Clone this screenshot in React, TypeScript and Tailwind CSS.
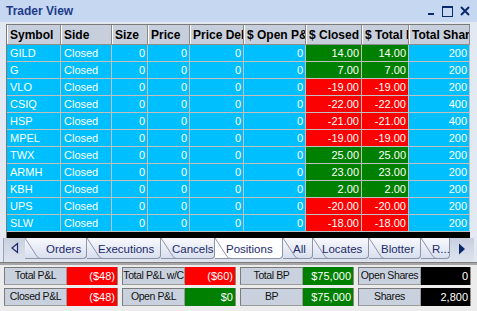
import React from "react";

const CYAN = "bg-[#00bfff]";
const GREEN = "bg-[#008000]";
const RED = "bg-[#ff0000]";

const cols = [
  { name: "Symbol", w: "w-[54px]", align: "left" },
  { name: "Side", w: "w-[51px]", align: "left" },
  { name: "Size", w: "w-[36px]", align: "right" },
  { name: "Price", w: "w-[42px]", align: "right" },
  { name: "Price Delta", w: "w-[54px]", align: "right" },
  { name: "$ Open P&L", w: "w-[62px]", align: "right" },
  { name: "$ Closed P&L", w: "w-[56px]", align: "right" },
  { name: "$ Total P&L", w: "w-[47px]", align: "right" },
  { name: "Total Shares", w: "w-[61px]", align: "right" },
];

const rows: [string, string, string][] = [
  ["GILD", "14.00", "200"],
  ["G", "7.00", "200"],
  ["VLO", "-19.00", "200"],
  ["CSIQ", "-22.00", "400"],
  ["HSP", "-21.00", "400"],
  ["MPEL", "-19.00", "200"],
  ["TWX", "25.00", "200"],
  ["ARMH", "23.00", "200"],
  ["KBH", "2.00", "200"],
  ["UPS", "-20.00", "200"],
  ["SLW", "-18.00", "200"],
];

const tabs = [
  { name: "Orders", w: "w-[62px]", pl: "pl-[21px]" },
  { name: "Executions", w: "w-[74px]", pl: "pl-[11px]" },
  { name: "Cancels", w: "w-[54px]", pl: "pl-[11px]" },
  { name: "Positions", w: "w-[68px]", pl: "pl-[11px]", active: true },
  { name: "All", w: "w-[30px]", pl: "pl-[10px]" },
  { name: "Locates", w: "w-[56px]", pl: "pl-[9px]" },
  { name: "Blotter", w: "w-[52px]", pl: "pl-[12px]" },
  { name: "R...", w: "w-[29px]", pl: "pl-[11px]" },
];

function Tab({ name, w, pl, active }: { name: string; w: string; pl: string; active?: boolean }) {
  return (
    <div
      className={`relative ${w} ${pl} h-[21px] pt-[5px] flex items-start border-r border-b border-[#8c94a8] rounded-br-[4px] overflow-hidden ${
        active ? "bg-white" : "bg-gradient-to-b from-[#f7f9fd] to-[#d9dfee]"
      } text-[11.5px] leading-[13px] text-[#1b2a6b]`}
    >
      <svg className="absolute left-0 top-0" width="16" height="21" viewBox="0 0 16 21">
        <path d="M0 0 L12 18.5 Q13.5 20.5 16 20.5" fill="none" stroke="#8c94a8" strokeWidth="1" />
      </svg>
      <span className="relative whitespace-nowrap">{name}</span>
    </div>
  );
}

function Stat({ label, value, color, vw }: { label: string; value: string; color: string; vw: string }) {
  return (
    <div className="flex h-[18px]">
      <div className="w-[63px] h-full bg-[#c9d1df] border border-t-[#7b7b7b] border-l-[#7b7b7b] border-r-[#9a9a9a] border-b-[#9a9a9a] flex items-center justify-center text-[10.5px] tracking-[-0.4px] text-[#111] whitespace-nowrap overflow-hidden">
        {label}
      </div>
      <div className={`${vw} h-full ${color} border-r border-[#8a8a8a] flex items-center justify-end pr-[2px] text-[11px] text-white`}>
        {value}
      </div>
    </div>
  );
}

export default function App() {
  return (
    <div className="w-[477px] h-[311px] overflow-hidden bg-[#e3e9f3] flex flex-col font-['Liberation_Sans',Arial,sans-serif]">
      {/* Title bar */}
      <div className="h-[22px] bg-[#c6d7f1] flex items-center pl-[6px] pr-[7px] shrink-0">
        <span className="text-[12px] font-bold text-[#1d3b8b]">Trader View</span>
        <div className="ml-auto flex items-center gap-[7px]">
          <svg width="10" height="12" viewBox="0 0 10 12">
            <rect x="3" y="8" width="6" height="2" fill="#0b2a6c" />
          </svg>
          <svg width="11" height="11" viewBox="0 0 11 11">
            <rect x="0.5" y="0.5" width="10" height="10" fill="none" stroke="#0b2a6c" strokeWidth="1" />
            <rect x="0" y="0" width="11" height="2" fill="#0b2a6c" />
          </svg>
          <svg width="10" height="10" viewBox="0 0 10 10">
            <path d="M1 1 L9 9 M9 1 L1 9" stroke="#0b2a6c" strokeWidth="2" />
          </svg>
        </div>
      </div>
      <div className="h-[2px] shrink-0" />

      {/* Grid */}
      <div className="ml-[6px] w-[464px] h-[214px] bg-black border-l border-t border-[#7a7a7a] flex flex-col shrink-0">
        <div className="flex h-[20px] bg-[#c8cfdc] border-b border-[#8e8e8e]">
          {cols.map((c) => (
            <div
              key={c.name}
              className={`${c.w} h-full border-l border-white border-r border-r-[#8a8a8a] flex items-center pl-[2px] overflow-hidden whitespace-nowrap text-[12px] font-bold text-black`}
            >
              {c.name}
            </div>
          ))}
        </div>
        {rows.map(([sym, pl, sh]) => {
          const pc = pl.startsWith("-") ? RED : GREEN;
          const cells = [sym, "Closed", "0", "0", "0", "0", pl, pl, sh];
          return (
            <div key={sym} className="flex h-[17px]">
              {cells.map((v, i) => (
                <div
                  key={i}
                  className={`${cols[i].w} h-full border-r border-b border-[#c0c0c0] ${
                    i === 6 || i === 7 ? pc : CYAN
                  } flex items-center ${cols[i].align === "left" ? "pl-[3px]" : "justify-end pr-[2px]"} text-[11px] text-white whitespace-nowrap overflow-hidden`}
                >
                  {v}
                </div>
              ))}
            </div>
          );
        })}
      </div>

      {/* Tab strip */}
      <div className="ml-[3px] w-[471px] h-[24px] bg-gradient-to-b from-[#c7cfe0] to-[#dfe4ee] flex items-start shrink-0 border-l border-[#9aa3b5]">
        <div className="w-[21px] h-[21px] pt-[4px] flex items-start justify-center">
          <svg width="8" height="12" viewBox="0 0 8 12">
            <path d="M6.5 1.5 L1 6 L6.5 10.5 Z" fill="none" stroke="#1b2a6b" strokeWidth="1.2" />
          </svg>
        </div>
        {tabs.map((t) => (
          <Tab key={t.name} {...t} />
        ))}
        <div className="w-[24px] h-[21px] pt-[5px] flex items-start justify-center">
          <svg width="8" height="12" viewBox="0 0 8 12">
            <path d="M1 0.5 L7 6 L1 11.5 Z" fill="#0b2a6c" />
          </svg>
        </div>
      </div>
      <div className="h-[3px] bg-[#a6a6a6] border-t border-[#7e7e7e] shrink-0" />

      {/* Summary */}
      <div className="flex-1 bg-[#ececec] pl-[4px] pt-[2px] flex flex-col gap-[3px]">
        <div className="flex gap-[4px]">
          <Stat label="Total P&L" value="($48)" color={RED} vw="w-[51px]" />
          <Stat label="Total P&L w/C" value="($60)" color={RED} vw="w-[51px]" />
          <Stat label="Total BP" value="$75,000" color={GREEN} vw="w-[51px]" />
          <Stat label="Open Shares" value="0" color="bg-black" vw="w-[50px]" />
        </div>
        <div className="flex gap-[4px]">
          <Stat label="Closed P&L" value="($48)" color={RED} vw="w-[51px]" />
          <Stat label="Open P&L" value="$0" color={GREEN} vw="w-[51px]" />
          <Stat label="BP" value="$75,000" color={GREEN} vw="w-[51px]" />
          <Stat label="Shares" value="2,800" color="bg-black" vw="w-[50px]" />
        </div>
      </div>
    </div>
  );
}
